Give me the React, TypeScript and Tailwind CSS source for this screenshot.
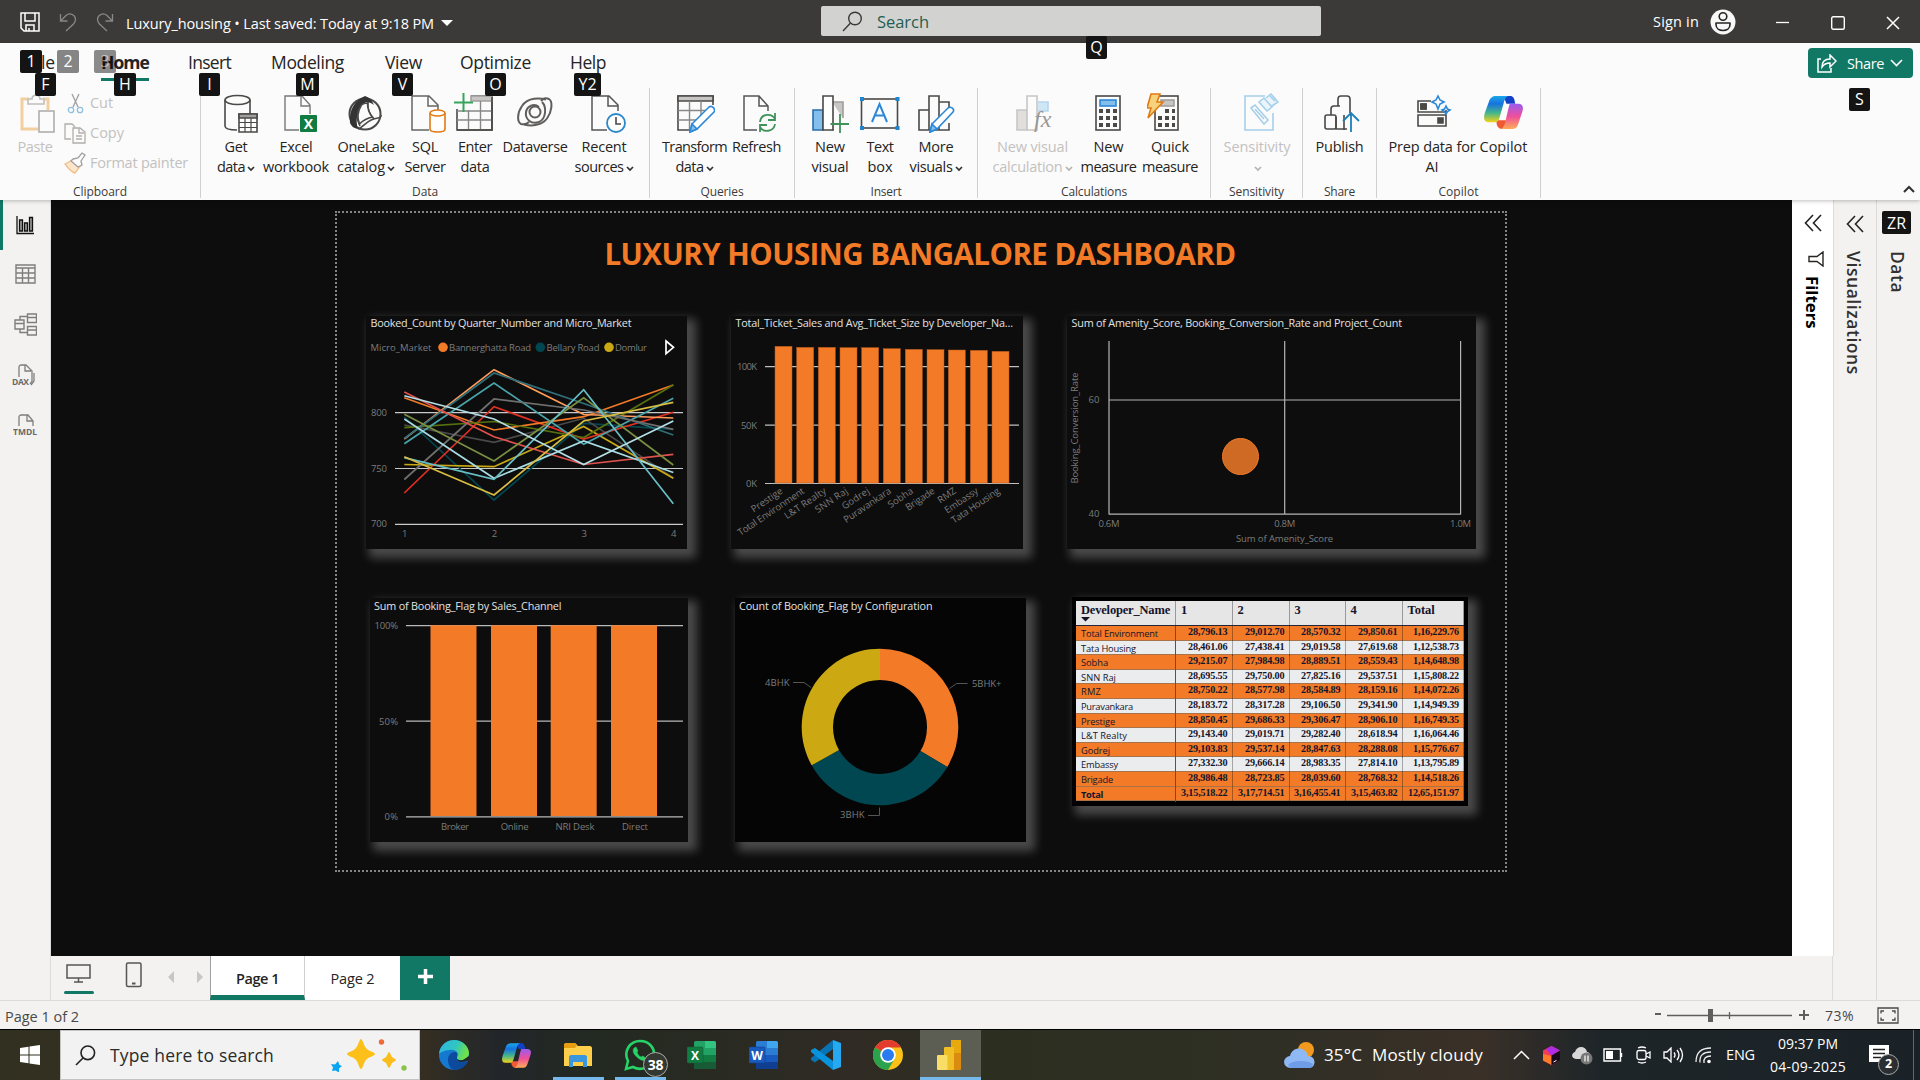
import React, { useLayoutEffect, useRef, useState } from "react";

/* Text set to a known width by spreading the difference over its letters. */
function Fit({ w, children, className = "" }: { w: number; children: string; className?: string }) {
  const ref = useRef<HTMLSpanElement>(null);
  const [ls, setLs] = useState(0);
  useLayoutEffect(() => {
    if (ref.current) {
      const natural = ref.current.getBoundingClientRect().width;
      setLs((w - natural) / children.length);
    }
  }, []);
  return (
    <span className={`inline-block shrink-0 whitespace-nowrap ${className}`} style={{ width: w }}>
      <span ref={ref} style={{ letterSpacing: ls }}>{children}</span>
    </span>
  );
}

function Key({ children, className = "" }: { children: string; className?: string }) {
  return (
    <span className={`absolute z-20 flex h-[23px] items-center justify-center rounded-[2px] text-[16px] text-white ${className}`}>
      {children}
    </span>
  );
}

const Chev = ({ c = "#323130" }: { c?: string }) => (
  <svg width="8" height="6" viewBox="0 0 8 6" className="ml-[2px] mt-[3px] inline-block" fill="none" stroke={c} strokeWidth="1.7"><path d="M1 1l3 3 3-3" /></svg>
);

/* ---------- title bar ---------- */
function TitleBar() {
  return (
    <header className="flex h-[43px] items-center bg-[#3b3a38] text-white">
      <svg width="20" height="20" viewBox="0 0 20 20" className="ml-[20px]" fill="none" stroke="#fff" strokeWidth="1.5"><path d="M1 1h18v18H4l-3-3zM5 1v8h10V1M6 19v-6h8v6M9 16v3" /></svg>
      <svg width="18" height="20" viewBox="0 0 18 20" className="ml-[19px]" fill="none" stroke="#8a8886" strokeWidth="1.3"><path d="M1.500 2v7h7M1.500 9L7 3.500c4-3.500 9.500-.5 9.500 4 0 2-.8 3-2 4.500L7 19" /></svg>
      <svg width="18" height="20" viewBox="0 0 18 20" className="ml-[19px]" fill="none" stroke="#8a8886" strokeWidth="1.3"><path d="M16.500 2v7h-7M16.500 9L11 3.500c-4-3.500-9.500-.5-9.500 4 0 2 .8 3 2 4.500L11 19" /></svg>
      <Fit w={308} className="ml-[12px] mt-[5px] text-[14.500px]">Luxury_housing • Last saved: Today at 9:18 PM</Fit>
      <svg width="12" height="7" viewBox="0 0 12 7" className="ml-[7px] mt-[3px]" fill="#fff"><path d="M0 0h12L6 6z" /></svg>
      <div className="ml-[368px] mb-[1px] flex h-[30px] w-[500px] items-center rounded-[2px] bg-[#d2d2d0]">
        <svg width="21" height="21" viewBox="0 0 21 21" className="ml-[21px]" fill="none" stroke="#3b3a39" strokeWidth="1.400"><circle cx="13" cy="7.500" r="6.300" /><path d="M8.500 12L1 20" /></svg>
        <Fit w={52} className="ml-[14px] mt-[2px] text-[16.500px] text-[#1f5f50]">Search</Fit>
      </div>
      <Fit w={46} className="ml-[332px] text-[14.500px]">Sign in</Fit>
      <svg width="26" height="26" viewBox="0 0 26 26" className="ml-[11px]"><circle cx="13" cy="13" r="12.500" fill="#f8f8f8" /><circle cx="13" cy="7.500" r="3.800" fill="none" stroke="#252423" strokeWidth="1.600" /><path d="M6 14h14v1.500c0 8-14 8-14 0z" fill="none" stroke="#252423" strokeWidth="1.600" strokeLinejoin="round" /></svg>
      <svg width="13" height="14" viewBox="0 0 13 14" className="ml-[40px]" stroke="#fff" strokeWidth="1.300"><path d="M0 7.500h13" /></svg>
      <svg width="14" height="14" viewBox="0 0 14 14" className="ml-[42px] mt-[2px]" fill="none" stroke="#fff" strokeWidth="1.400"><rect x=".7" y=".7" width="12.600" height="12.600" rx="1.500" /></svg>
      <svg width="14" height="14" viewBox="0 0 14 14" className="ml-[41px] mt-[3px]" stroke="#fff" strokeWidth="1.500"><path d="M1 1l12 12M13 1L1 13" /></svg>
    </header>
  );
}

/* ---------- ribbon icons ---------- */
const D = "#4a4947";
const I = ({ children, w = 40 }: { children: React.ReactNode; w?: number }) => (
  <svg width={w} height="40" viewBox={`0 0 ${w} 40`} fill="none" stroke={D} strokeWidth="1.600" className="shrink-0">{children}</svg>
);
const icons: Record<string, React.ReactNode> = {
  get: <I><path d="M6 7v26c0 2.500 5 4 12 4M31 7v14" /><ellipse cx="18.500" cy="7" rx="12.500" ry="4.500" /><path d="M20 21h18v18H20z" fill="#fff" /><path d="M20 21h18v4H20z" fill="#a19f9d" /><path d="M20 29.500h18M20 34.500h18M26 25v14M32 25v14" strokeWidth="1.200" /></I>,
  excel: <I><path d="M32 21V12l-8-9H7v34h14M23 3v10h9" stroke="#777" strokeWidth="1.400" /><rect x="22" y="22" width="17" height="17" rx="1" fill="#107c41" stroke="none" /><text x="30.500" y="36" textAnchor="middle" fontSize="14" fontWeight="700" fill="#fff" stroke="none">X</text></I>,
  lake: <I><circle cx="20" cy="21" r="15.500" strokeWidth="2" /><path d="M20 3C9 8 4 17 5 30c2 4 4 5 8 6-3-9-1-19 8-27 2 0 6 1 8 3C27 7 24 4 20 3z" fill="#333" stroke="none" /><path d="M16 13c-5 8-4 15-1 20M13 36c6-2 9-10 20-11 2 0 3-1 3-3M23 9c-1 8 2 13 6 17" /><path d="M16.500 12c-5 8-4 14-2 19 4-4 8-6 13-7-4-4-5-9-5-14-2 0-4 0-6 2z" fill="#fbfbfb" /></I>,
  sql: <I><path d="M32 17v-5l-9-9H6v34h17M22 3v10h10" stroke="#666" strokeWidth="1.500" /><path d="M24 20v16c0 4 15 4 15 0V20" stroke="#e07b12" fill="#fff" /><ellipse cx="31.500" cy="20" rx="7.500" ry="3" stroke="#e07b12" fill="#fff" /></I>,
  enter: <I><path d="M17 3h21v34H3V16" /><path d="M17 3h21v5H17z" fill="#c8c6c4" stroke="#a19f9d" /><path d="M3 18h35M3 27h35M14.500 17v20M26.500 8v29" stroke="#888" strokeWidth="1.400" /><path d="M3 37h35V4" /><path d="M9.500 0v19M0 9.500h19" stroke="#35a559" strokeWidth="2" /></I>,
  dv: <I><g stroke="#605e5c" strokeWidth="2"><path d="M31 7.500C25 6 13 5 7 14c-5 7-5 16-1 18 4 1 6 0 8-2" /><path d="M9 32.500c6 1.500 17 2 23-6 5-7 6-17 2-19.500-4-2-6 0-8 2" /><path d="M27 10c5 5 4 17-3 20-8 3-14-3-13-10 1-6 8-9 13-5" /><circle cx="20" cy="20" r="5.500" /></g></I>,
  recent: <I><path d="M32 18v-6l-9-9H6v34h15M22 3v10h10" stroke="#555" strokeWidth="1.500" /><circle cx="30" cy="30" r="9" fill="#fff" stroke="#2b88c8" strokeWidth="1.800" /><path d="M30 24v7h5" /></I>,
  transform: <I><path d="M38 12V3H3v34h13" /><path d="M3 3h35v5H3z" fill="#c8c6c4" /><path d="M3 17.500h28M3 27h20M14.500 8v28M26 8v14" stroke="#888" strokeWidth="1.400" /><path d="M17 31L34 14c3-2 7 2 5 5L22 36l-7 3z" fill="#fff" stroke="#2b88d8" /><path d="M17 31l5 5-7 3z" fill="#83beec" stroke="#2b88d8" /></I>,
  refresh: <I><path d="M31 18v-5L22 3H7v34h13M22 3v10h9" stroke="#555" strokeWidth="1.500" /><path d="M23 29c1-9 12-9 15-3M38 20v7h-7M38 31c-1 8-12 9-15 3M23 39v-7h7" stroke="#41925a" strokeWidth="1.800" /></I>,
  newv: <I><path d="M3 17h10v20H3z" fill="#83beec" stroke="#2b6ea8" /><path d="M22 9h11v16M24 37h-2V9" fill="#c8c6c4" stroke="#a19f9d" /><path d="M13 3h10v34H13z" fill="#fff" /><path d="M30 21v19M20.500 31H39" stroke="#41925a" strokeWidth="1.800" /></I>,
  tb: <I><rect x="1.500" y="6" width="36" height="29" /><path d="M12 29l7.500-18L27 29M15 22.500h10" stroke="#2b88d8" strokeWidth="2" /><g fill="#1c86d1" stroke="none"><path d="M0 4h4v4H0zM35.500 4h4v4h-4zM0 33h4v4H0zM35.500 33h4v4h-4z" /></g></I>,
  more: <I><path d="M3 17h10v20H3zM13 3h10v34H13zM23 9h10v8M33 30v7H23" /><path d="M16 31L32 15c3-2 7 1 5 4L21 36l-7 3z" fill="#fff" stroke="#2b88d8" /><path d="M16 31l5 5-7 3z" fill="#83beec" stroke="#2b88d8" /></I>,
  calc: <I><path d="M4 17h10v20H4z" fill="#e1dfdd" stroke="#c8c6c4" /><path d="M25 9h10v9H25" fill="#cfe6f7" stroke="#b5d6ee" /><path d="M14 3h10v34H14z" fill="#fbfbfb" stroke="#c8c6c4" /><text x="21" y="34" fontSize="24" fontStyle="italic" fontFamily="Liberation Serif" fill="#9a9896" stroke="none">fx</text></I>,
  measure: <I><rect x="8" y="3" width="24" height="34" /><rect x="12" y="7" width="16" height="6" fill="#83beec" stroke="#2b88d8" /><g fill={D} stroke="none"><path d="M11 16h4v4h-4zM18 16h4v4h-4zM25 16h4v4h-4zM11 23h4v4h-4zM18 23h4v4h-4zM25 23h4v4h-4zM11 30h4v4h-4zM18 30h4v4h-4zM25 30h4v4h-4z" /></g></I>,
  quick: <I><rect x="8" y="3" width="23" height="34" /><rect x="14" y="7" width="13" height="6" fill="#c8c6c4" stroke="#a19f9d" /><g fill={D} stroke="none"><path d="M11 23h4v4h-4zM18 16h4v4h-4zM25 16h3v4h-3zM18 23h4v4h-4zM25 23h3v4h-3zM11 30h4v4h-4zM18 30h4v4h-4zM25 30h3v4h-3z" /></g><path d="M4 1h9l-3 8h6L1 25l3-10H0z" fill="#f7d27c" stroke="#e07b12" strokeWidth="1.600" /></I>,
  sens: <I><g stroke="#a6cfea"><path d="M26 3H6v34h28V20" /><path d="M12 15l4-3 13 15-4 4zM16 16l9 10" /><path d="M20 9l5-4 8 9-5 4zM27 5l5-4 7 8-6 4M31 3l5 5" fill="#eaf4fb" /></g></I>,
  publish: <I w={38}><rect x="2" y="22" width="11" height="14" rx="2" /><path d="M8 22v-6c0-2 1-3 3-3h6M13 24v12h11M15 13V6c0-2 1-3 3-3h6c2 0 3 1 3 3v14M21 22v15" /><path d="M28 39V20M20 28l8-8 8 8" stroke="#1c7fb8" strokeWidth="1.800" /></I>,
  prep: <I><path d="M19 8H6v11h28v-2M6 22h28v11H6zM9 11h5v5H9z" /><path d="M9 11h5v5H9zM26 25h5v5h-5z" fill={D} /><path d="M26 3l2 4 4 2-4 2-2 5-2-5-4-2 4-2zM34 13l1.500 3 2.500 1-2.500 1.500L34 21l-1.500-2.500L30 17l2.500-1z" stroke="#2b88d8" /></I>,
};

function CopilotLogo({ s }: { s: number }) {
  return (
    <svg width={s} height={s} viewBox="0 0 40 40" className="shrink-0">
      <defs>
        <linearGradient id="cpA" x1="0" y1="0" x2="0" y2="1"><stop offset="0" stopColor="#19a8e8" /><stop offset=".3" stopColor="#1673e0" /><stop offset=".65" stopColor="#46b68a" /><stop offset="1" stopColor="#f4d417" /></linearGradient>
        <linearGradient id="cpB" x1="0" y1="0" x2="0" y2="1"><stop offset="0" stopColor="#9a5cf0" /><stop offset=".5" stopColor="#ee4f9b" /><stop offset="1" stopColor="#ffad55" /></linearGradient>
      </defs>
      <path d="M20 3h7c3 0 4 2 5 8h-9z" fill="#1241c8" />
      <path d="M13 28c-1 5 2 9 5 9h3l4-9z" fill="#ef5a35" />
      <path d="M12 3h13c-3 1-4 4-5 8l-4 14c-1 4-3 5-6 5H5c-5 0-6-4-4-10L5 9c1-4 4-6 7-6z" fill="url(#cpA)" />
      <path d="M27 11h8c5 0 6 4 4 9l-4 12c-1 4-4 5-7 5H17c3-1 4-4 5-8l3-13c1-3 1-5 2-5z" fill="url(#cpB)" />
    </svg>
  );
}

type Btn = { w: number; icon: React.ReactNode; a: string; aw: number; b?: string; bw?: number; chev?: boolean; dim?: boolean; dx?: string };
function RibbonButton({ w, icon, a, aw, b, bw, chev, dim, dx = "" }: Btn) {
  return (
    <div className={`flex shrink-0 flex-col items-center text-[14.500px] leading-5 ${dim ? "text-[#c3c1bf]" : "text-[#252423]"}`} style={{ width: w }}>
      <div className={`h-[40px] ${dx}`}>{icon}</div>
      <div className="mt-[4px] flex h-5 justify-center"><Fit w={aw}>{a}</Fit></div>
      <div className="flex h-5 items-center justify-center whitespace-nowrap">
        {b && <Fit w={bw || 40}>{b}</Fit>}
        {chev && <Chev c={dim ? "#b5b3b1" : "#323130"} />}
      </div>
    </div>
  );
}
function Group({ w, label, lw, children, pad = "" }: { w: number; label: string; lw: number; children: React.ReactNode; pad?: string }) {
  return (
    <section className="flex h-[110px] shrink-0 flex-col border-r border-[#d2d0ce]" style={{ width: w }}>
      <div className={`flex h-[95px] shrink-0 pt-[5px] ${pad}`}>{children}</div>
      <div className="flex h-[15px] shrink-0 justify-center text-[12px] leading-[17px] text-[#3b3a39]"><Fit w={lw}>{label}</Fit></div>
    </section>
  );
}

function Ribbon() {
  return (
    <div className="relative z-10 h-[157px] bg-[#fbfbfb] shadow-[0_1px_4px_rgba(0,0,0,0.25)]">
      <nav className="relative flex h-[45px] items-start pt-[7px] text-[17.500px] leading-[25px] text-[#252423]">
        <Fit w={27} className="ml-[28px]">File</Fit>
        <div className="ml-[46px] h-[31px] border-b-[3px] border-[#117865]"><Fit w={48} className="font-bold">Home</Fit></div>
        <Fit w={43} className="ml-[39px]">Insert</Fit>
        <Fit w={73} className="ml-[40px]">Modeling</Fit>
        <Fit w={37} className="ml-[41px]">View</Fit>
        <Fit w={71} className="ml-[38px]">Optimize</Fit>
        <Fit w={36} className="ml-[39px]">Help</Fit>
        <div className="ml-[1202px] -mt-[2px] flex h-[30px] w-[105px] items-center rounded-[4px] bg-[#117865] text-[14.500px] text-white">
          <svg width="20" height="19" viewBox="0 0 20 19" className="ml-[9px]" fill="none" stroke="#fff" strokeWidth="1.500"><path d="M4 5H1v13h13v-4M5 13c0-5 3-8 8-8V1l6 6-6 6V9c-4 0-6 1-8 4z" /></svg>
          <Fit w={37} className="ml-[10px]">Share</Fit>
          <svg width="13" height="8" viewBox="0 0 13 8" className="ml-[6px]" fill="none" stroke="#fff" strokeWidth="1.600"><path d="M1 1l5.500 5.500L12 1" /></svg>
        </div>
        <Key className="left-[20px] top-[7px] w-[22px] bg-[#141414]">1</Key>
        <Key className="left-[57px] top-[7px] w-[22px] bg-[#858585] text-[#e8e8e8]">2</Key>
        <Key className="left-[94px] top-[7px] w-[22px] bg-black/45 text-white/50">3</Key>
        <Key className="left-[35px] top-[30px] w-[21px] bg-[#141414]">F</Key>
        <Key className="left-[114px] top-[30px] w-[22px] bg-[#141414]">H</Key>
        <Key className="left-[199px] top-[30px] w-[21px] bg-[#141414] text-[#60cdf5]">I</Key>
        <Key className="left-[296px] top-[30px] w-[23px] bg-[#141414]">M</Key>
        <Key className="left-[392px] top-[30px] w-[21px] bg-[#141414]">V</Key>
        <Key className="left-[485px] top-[30px] w-[21px] bg-[#141414]">O</Key>
        <Key className="left-[574px] top-[30px] w-[27px] bg-[#141414]">Y2</Key>
        <Key className="left-[1086px] -top-[7px] w-[21px] bg-[#141414]">Q</Key>
        <Key className="left-[1849px] top-[45px] w-[21px] bg-[#141414]">S</Key>
      </nav>
      <div className="flex">
        <Group w={201} label="Clipboard" lw={54}>
          <div className="ml-[17px] flex w-[38px] flex-col items-center text-[14.500px] leading-5 text-[#c3c1bf]">
            <svg width="38" height="40" viewBox="0 0 38 40" fill="none" strokeWidth="1.600"><path d="M12 6H5v30h16" stroke="#f3cf9f" strokeWidth="3" /><path d="M26 6h5v11" stroke="#f3cf9f" strokeWidth="3" /><path d="M11 11V6h4c0-5 8-5 8 0h4v5z" stroke="#c0bebc" fill="#fbfbfb" /><rect x="22" y="18" width="15" height="21" stroke="#b0aeac" fill="#fbfbfb" /></svg>
            <div className="mt-[4px] mr-[2px]"><Fit w={35}>Paste</Fit></div>
          </div>
          <div className="ml-[9px] flex flex-col text-[14.500px] text-[#c3c1bf]">
            <div className="-mt-[5px] flex h-[30px] items-center"><svg width="22" height="22" viewBox="0 0 22 22" fill="none" strokeWidth="1.300"><path d="M8 2l6 13M15 2L9 15" stroke="#a19f9d" /><circle cx="7" cy="18" r="2.700" stroke="#91c0df" /><circle cx="16" cy="18" r="2.700" stroke="#91c0df" /></svg><Fit w={23} className="ml-[4px]">Cut</Fit></div>
            <div className="flex h-[30px] items-center"><svg width="22" height="22" viewBox="0 0 22 22" fill="none" stroke="#b0aeac" strokeWidth="1.300"><path d="M7 17H1V2h7l3 3M9 6h7l5 4v11H9zM15 6v5h5M12 14h6M12 17h6" /></svg><Fit w={34} className="ml-[4px]">Copy</Fit></div>
            <div className="flex h-[30px] items-center"><svg width="22" height="22" viewBox="0 0 22 22" fill="none" strokeWidth="1.300"><path d="M1 12l9-5 7 6-6 8c-4-1-7-5-10-9z" stroke="#efc08a" fill="#fbe6cc" /><path d="M9 7l5-1 4-5 3 2-4 6 1 4-4 2-7-6z" stroke="#a19f9d" fill="#fbfbfb" /></svg><Fit w={98} className="ml-[4px]">Format painter</Fit></div>
          </div>
        </Group>
        <Group w={449} label="Data" lw={26} pad="pl-[8px]">
          <RibbonButton w={54} icon={icons.get} dx="ml-[6px]" a="Get" aw={23} b="data" bw={28} chev />
          <RibbonButton w={66} icon={icons.excel} dx="ml-[4px]" a="Excel" aw={33} b="workbook" bw={66} />
          <RibbonButton w={74} icon={icons.lake} dx="-ml-[2px]" a="OneLake" aw={57} b="catalog" bw={48} chev />
          <RibbonButton w={44} icon={icons.sql} dx="ml-[2px]" a="SQL" aw={26} b="Server" bw={41} />
          <RibbonButton w={56} icon={icons.enter} dx="-ml-[2px]" a="Enter" aw={34} b="data" bw={29} />
          <RibbonButton w={64} icon={icons.dv} dx="-mt-[1px] mb-[1px]" a="Dataverse" aw={65} />
          <RibbonButton w={74} icon={icons.recent} dx="ml-[3px]" a="Recent" aw={45} b="sources" bw={49} chev />
        </Group>
        <Group w={145} label="Queries" lw={43} pad="pl-[10px]">
          <RibbonButton w={69} icon={icons.transform} a="Transform" aw={65} b="data" bw={28} chev />
          <RibbonButton w={55} icon={icons.refresh} a="Refresh" aw={49} />
        </Group>
        <Group w={183} label="Insert" lw={31} pad="pl-[12px]">
          <RibbonButton w={46} icon={icons.newv} a="New" aw={30} b="visual" bw={37} />
          <RibbonButton w={54} icon={icons.tb} a="Text" aw={27} b="box" bw={25} />
          <RibbonButton w={58} icon={icons.more} a="More" aw={35} b="visuals" bw={43} chev />
        </Group>
        <Group w={233} label="Calculations" lw={66} pad="pl-[9px]">
          <RibbonButton w={91} icon={icons.calc} a="New visual" aw={71} b="calculation" bw={70} chev dim />
          <RibbonButton w={61} icon={icons.measure} dx="-ml-[2px]" a="New" aw={30} b="measure" bw={56} />
          <RibbonButton w={62} icon={icons.quick} dx="-ml-[7px]" a="Quick" aw={38} b="measure" bw={56} />
        </Group>
        <Group w={92} label="Sensitivity" lw={55} pad="pl-[1px] justify-center">
          <RibbonButton w={80} icon={icons.sens} a="Sensitivity" aw={67} chev dim dx="ml-[3px]" />
        </Group>
        <Group w={74} label="Share" lw={31} pad="justify-center">
          <RibbonButton w={60} icon={icons.publish} dx="ml-[4px]" a="Publish" aw={48} />
        </Group>
        <Group w={164} label="Copilot" lw={40} pad="pl-[11px]">
          <RibbonButton w={88} icon={icons.prep} a="Prep data for" aw={87} b="AI" bw={13} />
          <RibbonButton w={55} icon={<CopilotLogo s={39} />} a="Copilot" aw={48} />
        </Group>
        <svg width="12" height="8" viewBox="0 0 12 8" className="ml-auto mr-[5px] mt-[97px]" fill="none" stroke="#323130" strokeWidth="2"><path d="M1 7l5-5 5 5" /></svg>
      </div>
    </div>
  );
}

/* ---------- side rail ---------- */
function Rail() {
  return (
    <aside className="flex w-[51px] shrink-0 flex-col border-r border-[#dddbd9] bg-[#f3f2f1]">
      <div className="flex h-[50px] items-center border-l-[3px] border-[#117865] pl-[13px]"><svg width="19" height="19" viewBox="0 0 19 19" fill="#999" stroke="#111" strokeWidth="1.300"><path d="M1 0v17.500h17" fill="none" /><path d="M3.500 4h3v11h-3zM8.500 7h3v8h-3zM13.500 1.500h3V15h-3z" /></svg></div>
      <div className="flex h-[49px] items-center pl-[15px]"><svg width="21" height="20" viewBox="0 0 21 20" className="-mt-[2px]" fill="none" stroke="#807e7c" strokeWidth="1.400"><path d="M1 1h19v18H1zM1 4h19M1 9h19M1 14h19M7.500 4v15M13.500 4v15" /></svg></div>
      <div className="flex h-[51px] items-center pl-[14px]"><svg width="23" height="23" viewBox="0 0 23 23" fill="none" stroke="#807e7c" strokeWidth="1.400"><path d="M1 7h9v9H1zM1 10.500h9M13.500 1h9v8.500h-9zM13.500 4.500h9M13.500 13.500h9V22h-9zM13.500 17h9M6 7V3.500h7M6 16v3.500h7" /></svg></div>
      <div className="flex h-[50px] items-center pl-[12px]"><svg width="24" height="22" viewBox="0 0 24 22" fill="none" stroke="#807e7c" strokeWidth="1.300"><path d="M7 13V3c0-1 1-2 2-2h5l6 6v10l-2 3M13 1v6h6M22 9v8l-3 4" /><text x="0" y="20.500" fontSize="8.500" fontWeight="700" fill="#6b6967" stroke="none" textLength="17">DAX</text></svg></div>
      <div className="flex h-[50px] items-center pl-[13px]"><svg width="25" height="22" viewBox="0 0 25 22" fill="none" stroke="#807e7c" strokeWidth="1.300"><path d="M6 12V3c0-1 1-2 2-2h7l5 6v5M14 1v6h6" /><text x="0" y="20.500" fontSize="8.500" fontWeight="700" fill="#6b6967" stroke="none" textLength="24">TMDL</text></svg></div>
    </aside>
  );
}

/* ---------- report visuals ---------- */
const OR = "#f37a26";
function Card({ x, y, w, h, children }: { x: number; y: number; w: number; h: number; children: React.ReactNode }) {
  return (
    <svg width={w} height={h} viewBox={`${x} ${y} ${w} ${h}`} className="shrink-0 bg-[#0d0d0d] shadow-[6px_6px_9px_3px_rgba(255,255,255,0.25)]">
      {children}
    </svg>
  );
}
type TP = { x: number; y: number; w?: number; s?: number; fill?: string; anchor?: "start" | "middle" | "end"; children: string; transform?: string };
const T = ({ x, y, w, s = 9.5, fill = "#7c7c7c", anchor = "start", children, transform }: TP) => (
  <text x={x} y={y} fontSize={s} fill={fill} textAnchor={anchor} textLength={w} transform={transform}>{children}</text>
);
const Title = ({ x, y, w, children }: { x: number; y: number; w: number; children: string }) => <T x={x} y={y} w={w} s={10.8} fill="#e2e2e2">{children}</T>;

const series: [string, number[]][] = [
  ["#014751", [417, 500, 423.3, 429.3]],
  ["#4a4a4a", [425, 442.300, 418.300, 478]],
  ["#c9a814", [464.500, 466.700, 426.500, 478.300]],
  ["#e02f23", [493, 406.700, 439, 412.300]],
  [OR, [397.700, 430, 416.700, 385]],
  ["#57700f", [427.700, 421.500, 437.500, 385]],
  ["#ff9c5c", [439, 369.700, 414.500, 418]],
  ["#2f6f7a", [438.500, 373, 403.500, 435]],
  ["#4aa5ab", [443.700, 383, 444.300, 398.300]],
  ["#6f6f6f", [479.500, 399, 410, 429.300]],
  ["#e0524d", [392, 436.700, 464.500, 454.300]],
  ["#7a8f42", [414.300, 461, 397.700, 465]],
  ["#a8dce2", [419, 478.300, 441, 472.500]],
  ["#69bfc7", [457.700, 479.300, 389.700, 503.700]],
  ["#d9bd42", [456.700, 495, 421, 402.300]],
  ["#b5dfe6", [395.700, 419, 464.500, 421]],
];
const xs = [404.3, 494, 583.7, 673.3];

function LineChart() {
  return (
    <Card x={366} y={316} w={321} h={233}>
      <Title x={370.500} y={327} w={261}>Booked_Count by Quarter_Number and Micro_Market</Title>
      <T x={370.500} y={351} w={61}>Micro_Market</T>
      <circle cx="443" cy="347.300" r="4.800" fill={OR} /><T x={449} y={351} w={82}>Bannerghatta Road</T>
      <circle cx="540.300" cy="347.300" r="4.800" fill="#014751" /><T x={546.500} y={351} w={53}>Bellary Road</T>
      <circle cx="609" cy="347.300" r="4.800" fill="#c9a814" /><T x={615} y={351} w={32}>Domlur</T>
      <path d="M666 341l7.500 6.300-7.500 6.300z" fill="none" stroke="#fff" strokeWidth="1.700" />
      <path d="M395 412.700h288M395 468.500h288M395 524.300h288" stroke="#c9c9c9" strokeWidth="1.200" />
      <T x={371} y={416} w={16}>800</T><T x={371} y={472} w={16}>750</T><T x={371} y={527} w={16}>700</T>
      {["1", "2", "3", "4"].map((n, i) => <T key={n} x={xs[i] + 0.500} y={537} anchor="middle">{n}</T>)}
      {series.map(([c, v], i) => <polyline key={i} points={v.map((y, k) => `${xs[k]},${y}`).join(" ")} fill="none" stroke={c} strokeWidth="1.700" />)}
    </Card>
  );
}

const devs: [string, number, number, number][] = [
  ["Prestige", 195, 139, 36], ["Total Environment", 260, 142, 78], ["L&T Realty", 325, 142, 48], ["SNN Raj", 390, 143, 37], ["Godrej", 455, 143, 31],
  ["Puravankara", 520, 146, 55], ["Sobha", 586, 148, 28], ["Brigade", 651, 149, 33], ["RMZ", 715, 150, 20], ["Embassy", 781, 151, 38], ["Tata Housing", 846, 154, 56],
];
function TicketChart() {
  return (
    <Card x={731} y={316} w={292} h={233}>
      <Title x={735.500} y={327} w={277.500}>Total_Ticket_Sales and Avg_Ticket_Size by Developer_Na...</Title>
      <path d="M765 366.700h254M765 425.200h254M765 483.500h254" stroke="#c0c0c0" strokeWidth="1.200" />
      <T x={757} y={370} w={20} anchor="end">100K</T><T x={757} y={428.500} w={16} anchor="end">50K</T><T x={757} y={487} w={11} anchor="end">0K</T>
      {devs.map(([n, x, t, w]) => {
        const bx = 710 + x / 3, by = 300 + t / 3;
        return (
          <g key={n}>
            <rect x={bx} y={by} width={17} height={483 - by} fill={OR} stroke="#b5591b" strokeWidth=".5" />
            <T x={bx + 8.500} y={492.500} w={w} anchor="end" transform={`rotate(-34 ${bx + 8.500} 492.500)`}>{n}</T>
          </g>
        );
      })}
    </Card>
  );
}

function Scatter() {
  return (
    <Card x={1067} y={316} w={409} h={233}>
      <Title x={1071.500} y={327} w={330.500}>Sum of Amenity_Score, Booking_Conversion_Rate and Project_Count</Title>
      <path d="M1109 341v173.500M1284.700 341v173.500M1460.600 341v173.500M1109 400h352M1109 514.200h352" stroke="#b4b4b4" strokeWidth="1.200" />
      <T x={1099.500} y={403} w={11} anchor="end">60</T><T x={1099.500} y={517} w={11} anchor="end">40</T>
      <T x={1109} y={527} w={21} anchor="middle">0.6M</T><T x={1284.700} y={527} w={21} anchor="middle">0.8M</T><T x={1460.600} y={527} w={21} anchor="middle">1.0M</T>
      <T x={1284.500} y={542} w={97} anchor="middle">Sum of Amenity_Score</T>
      <T x={1078} y={428} w={111} anchor="middle" transform="rotate(-90 1078 428)">Booking_Conversion_Rate</T>
      <circle cx="1240.500" cy="456.500" r="18" fill="#cf6a24" stroke="#ee7a2a" />
    </Card>
  );
}

const channels: [string, number, number, number][] = [["Broker", 430.500, 455, 28], ["Online", 491, 514.700, 28], ["NRI Desk", 550.700, 575, 39], ["Direct", 611, 635, 26]];
function Channels() {
  return (
    <Card x={370} y={598} w={318} h={244}>
      <Title x={374} y={609.500} w={187.500}>Sum of Booking_Flag by Sales_Channel</Title>
      <path d="M406 625.700h277M406 721.200h277M406 816.800h277" stroke="#b8b8b8" strokeWidth="1.200" />
      <T x={398} y={629} w={23.500} anchor="end">100%</T><T x={398} y={724.500} w={19} anchor="end">50%</T><T x={398} y={820} w={13.500} anchor="end">0%</T>
      {channels.map(([n, x, c, w]) => <g key={n}><rect x={x} y={625.300} width={46} height={190.700} fill={OR} /><T x={c} y={830} w={w} anchor="middle">{n}</T></g>)}
    </Card>
  );
}

function arc(a0: number, a1: number) {
  const p = (a: number, r: number) => `${880 + r * Math.sin((a * Math.PI) / 180)} ${727 - r * Math.cos((a * Math.PI) / 180)}`;
  return `M${p(a0, 78.3)}A78.3 78.3 0 0 1 ${p(a1, 78.3)}L${p(a1, 47)}A47 47 0 0 0 ${p(a0, 47)}Z`;
}
function Donut() {
  return (
    <Card x={735} y={598} w={291} h={244}>
      <rect x="735" y="598" width="291" height="244" fill="#050505" />
      <Title x={739} y={609.500} w={193.500}>Count of Booking_Flag by Configuration</Title>
      <path d={arc(0, 120.700)} fill={OR} /><path d={arc(120.700, 240.700)} fill="#014751" /><path d={arc(240.700, 360)} fill="#cca913" />
      <path d="M793 682.500h11l7 5M967.500 683.500h-11l-7 5M868 815.500h11.500v-8" fill="none" stroke="#555" />
      <T x={765} y={686} w={24.500}>4BHK</T><T x={972} y={687} w={29.500}>5BHK+</T><T x={840} y={818} w={24.500}>3BHK</T>
    </Card>
  );
}

const rows: [string, number, string[]][] = [
  ["Total Environment", 77, ["28,796.13", "29,012.70", "28,570.32", "29,850.61", "1,16,229.76"]],
  ["Tata Housing", 55, ["28,461.06", "27,438.41", "29,019.58", "27,619.68", "1,12,538.73"]],
  ["Sobha", 27, ["29,215.07", "27,984.98", "28,889.51", "28,559.43", "1,14,648.98"]],
  ["SNN Raj", 35, ["28,695.55", "29,750.00", "27,825.16", "29,537.51", "1,15,808.22"]],
  ["RMZ", 20, ["28,750.22", "28,577.98", "28,584.89", "28,159.16", "1,14,072.26"]],
  ["Puravankara", 52, ["28,183.72", "28,317.28", "29,106.50", "29,341.90", "1,14,949.39"]],
  ["Prestige", 34, ["28,850.45", "29,686.33", "29,306.47", "28,906.10", "1,16,749.35"]],
  ["L&T Realty", 46, ["29,143.40", "29,019.71", "29,282.40", "28,618.94", "1,16,064.46"]],
  ["Godrej", 29, ["29,103.83", "29,537.14", "28,847.63", "28,288.08", "1,15,776.67"]],
  ["Embassy", 37, ["27,332.30", "29,666.14", "28,983.35", "27,814.10", "1,13,795.89"]],
  ["Brigade", 32, ["28,986.48", "28,723.85", "28,039.60", "28,768.32", "1,14,518.26"]],
  ["Total", 22, ["3,15,518.22", "3,17,714.51", "3,16,455.41", "3,15,463.82", "12,65,151.97"]],
];
const serif = "font-['Liberation_Serif',serif] font-bold";
const cols = "grid grid-cols-[100px_56.5px_57px_56px_57px_61.5px]";
function Matrix() {
  return (
    <div className="-mt-px h-[209px] w-[396px] shrink-0 bg-black p-[4px] text-[#14142b] shadow-[6px_6px_9px_3px_rgba(255,255,255,0.25)]">
      <div className={`${cols} h-[25px] border-b border-[#252538] bg-[#e6e6e6] text-[12.500px] leading-[18px] ${serif}`}>
        <div className="flex flex-col border-r border-[#999] pl-[5px]"><Fit w={89} className="h-[16px]">Developer_Name</Fit><svg width="9" height="5" viewBox="0 0 9 5"><path d="M0 0h9L4.500 4.500z" fill="#14142b" /></svg></div>
        {["1", "2", "3", "4", "Total"].map((h) => <div key={h} className="border-r border-[#999] pl-[5px]">{h}</div>)}
      </div>
      {rows.map(([n, w, v], i) => (
        <div key={n} className={`${cols} h-[14.6px] border-b border-[#a8734a] leading-[14px] ${i % 2 === 0 || i === 11 ? "bg-[#f37a26]" : "bg-[#ebecee]"}`}>
          <div className={`border-r border-[#555] pl-[5px] pt-px text-[9.300px] ${i === 11 ? "font-bold" : ""}`}><Fit w={w}>{n}</Fit></div>
          {v.map((c, k) => <div key={k} className={`flex justify-end border-r border-black/30 pr-[4px] text-[10.200px] leading-[12px] ${serif}`}><Fit w={i === 11 ? (k === 4 ? 51 : 46.500) : k === 4 ? 46 : 39.500}>{c}</Fit></div>)}
        </div>
      ))}
    </div>
  );
}

function Report() {
  return (
    <main className="w-[1741px] shrink-0 bg-[#0d0d0d] pl-[284px] pt-[11px]">
      <div className="h-[661px] w-[1172px] border-2 border-dotted border-[#858585]">
        <h1 className="flex h-[86px] justify-center pt-[20px] text-[29.500px] font-bold leading-[42px] text-[#f37a26]"><Fit w={631} className="-ml-[2px]">LUXURY HOUSING BANGALORE DASHBOARD</Fit></h1>
        <div className="mt-[17px] flex pl-[29px]"><LineChart /><div className="w-[44px]" /><TicketChart /><div className="w-[44px]" /><Scatter /></div>
        <div className="mt-[49px] flex pl-[33px]"><Channels /><div className="w-[47px]" /><Donut /><div className="w-[46px]" /><Matrix /></div>
      </div>
    </main>
  );
}

const Collapse = () => <svg width="18" height="18" viewBox="0 0 18 18" fill="none" stroke="#252423" strokeWidth="1.600"><path d="M9 1L1.500 9 9 17M17 1L9.500 9 17 17" /></svg>;
function Panes() {
  return (
    <>
      <aside className="flex w-[41px] shrink-0 flex-col items-center bg-white pt-[14px]">
        <Collapse />
        <svg width="16" height="16" viewBox="0 0 16 16" className="ml-[7px] mt-[19px]" fill="none" stroke="#252423" strokeWidth="1.400"><path d="M15 1v14L9 10.500H1v-5h8z" /></svg>
        <div className="mt-[9px] mr-[2px] text-[16.800px] font-bold leading-[24px] text-black [writing-mode:vertical-rl]">Filters</div>
      </aside>
      <aside className="flex w-[44px] shrink-0 flex-col items-center border-x border-[#dddbd9] bg-[#f3f2f1] pt-[15px]">
        <Collapse />
        <div className="mt-[18px] mr-[3px] text-[17.500px] font-semibold leading-[24px] tracking-[0.560px] text-[#323130] [writing-mode:vertical-rl]">Visualizations</div>
      </aside>
      <aside className="relative flex w-[43px] shrink-0 flex-col items-center bg-[#f3f2f1] pt-[51px]">
        <Key className="left-[5px] top-[11px] w-[29px] bg-[#141414]">ZR</Key>
        <div className="mr-[2px] text-[17.500px] font-semibold leading-[24px] tracking-[0.500px] text-[#323130] [writing-mode:vertical-rl]">Data</div>
      </aside>
    </>
  );
}

function PageTabs() {
  return (
    <div className="flex">
      <div className="h-[44px] w-[51px] border-r border-[#dddbd9]" />
      <div className="flex h-[44px] w-[1782px] border-r border-[#dddbd9] text-[14.500px]">
        <div className="ml-[13px] flex w-[30px] flex-col items-center"><svg width="25" height="19" viewBox="0 0 25 19" className="mr-[2px] mt-[8px]" fill="none" stroke="#555" strokeWidth="1.500"><path d="M1 1h23v13H1zM12.500 14v4M8 18h9" /></svg><div className="mt-[8px] h-[3px] w-[30px] rounded bg-[#117865]" /></div>
        <svg width="18" height="26" viewBox="0 0 18 26" className="ml-[31px] mt-[6px]" fill="none" stroke="#555" strokeWidth="1.500"><rect x="1.500" y="1" width="14.500" height="23.500" rx="1.500" /><path d="M7 21.500h3.500" strokeWidth="2" /></svg>
        <svg width="36" height="12" viewBox="0 0 36 12" className="ml-[25px] mt-[15px]" fill="#c8c6c4"><path d="M6 0v12L0 6zM29 0v12l6-6z" /></svg>
        <div className="ml-[6px] flex w-[95px] justify-center border-b-[5px] border-l border-r border-b-[#117865] border-l-[#a19f9d] border-r-[#d2d0ce] bg-white pt-[12px] font-semibold text-[#252423]"><Fit w={43}>Page 1</Fit></div>
        <div className="flex w-[95px] justify-center bg-white pt-[12px] text-[#252423]"><Fit w={44}>Page 2</Fit></div>
        <div className="flex w-[50px] items-center justify-center bg-[#117865] pb-[3px]"><svg width="15" height="15" viewBox="0 0 15 15" stroke="#fff" strokeWidth="3.500"><path d="M7.500 0v15M0 7.500h15" /></svg></div>
      </div>
      <div className="h-[44px] w-[44px] border-r border-[#dddbd9]" />
    </div>
  );
}
function Status() {
  return (
    <div className="flex h-[30px] items-center border-b border-t border-b-black border-t-[#dddbd9] text-[14.500px] text-[#4a4947]">
      <Fit w={74} className="ml-[5px] mt-[4px]">Page 1 of 2</Fit>
      <svg width="156" height="18" viewBox="0 0 156 18" className="ml-[1575px]" fill="none" stroke="#605e5c"><path d="M1 8h6M145 9h10M150 4v10" strokeWidth="2" /><path d="M13 9.500h125M75.500 6v7" strokeWidth="1.300" /><path d="M56.500 3v13" strokeWidth="5" /></svg>
      <Fit w={29} className="ml-[15px] text-[14px]">73%</Fit>
      <svg width="22" height="17" viewBox="0 0 22 17" className="ml-[23px] mt-[1px]" fill="none" stroke="#4a4947" strokeWidth="1.300"><path d="M1 1h20v15H1zM4 6.500V4h3M15 4h3v2.500M18 10.500V13h-3M7 13H4v-2.500" /></svg>
    </div>
  );
}

/* ---------- taskbar ---------- */
function TaskItem({ children, on = false, active = false, w = "w-[62px]" }: { children: React.ReactNode; on?: boolean; active?: boolean; w?: string }) {
  return (
    <div className={`relative flex h-[50px] shrink-0 flex-col items-center justify-center ${w} ${active ? "bg-[#5c5d53]" : ""}`}>
      {children}
      {on && <div className={`absolute bottom-0 h-[3px] bg-[#76b9ed] ${active ? "w-full" : "w-[51px]"}`} />}
    </div>
  );
}
const Office = ({ c, l }: { c: string[]; l: string }) => (
  <svg width="30" height="28" viewBox="0 0 30 28"><rect x="7" y="0" width="22" height="28" rx="1.500" fill={c[1]} /><path d="M18 0h9.500L29 1.500V7H18z" fill={c[0]} /><path d="M7 14h22v7H7z" fill={c[2]} /><path d="M7 21h22v7H7z" fill={c[3]} /><rect x="0" y="6" width="16" height="16" rx="1" fill={c[2]} stroke={c[3]} strokeWidth=".6" /><text x="8" y="18.500" fontSize="12" fontWeight="700" fill="#fff" textAnchor="middle">{l}</text></svg>
);
function Taskbar() {
  return (
    <footer className="flex h-[50px] items-center bg-[linear-gradient(90deg,#323021_0,#352e22_420px,#22262a_500px,#232a21_600px,#302b24_850px,#2c2f20_1000px,#2f2f25_1260px,#3a3028_1480px,#1e2529_1600px,#1b2227_1920px)] text-white">
      <svg width="20" height="20" viewBox="0 0 20 20" className="ml-[20px]" fill="#fff"><path d="M0 3l8.500-1.200V9.500H0zM9.500 1.600L20 0v9.500H9.500zM0 10.500h8.500v7.800L0 17zM9.500 10.500H20V20L9.500 18.400z" /></svg>
      <div className="ml-[20px] flex h-[50px] w-[360px] items-center border border-[#c4c4c4] bg-[#f2f2f2] text-[#2b2b2b]">
        <svg width="21" height="21" viewBox="0 0 21 21" className="ml-[14px]" fill="none" stroke="#222" strokeWidth="1.600"><circle cx="12.800" cy="7.800" r="6.800" /><path d="M8 13L1 20" /></svg>
        <Fit w={164} className="ml-[14px] text-[17.500px]">Type here to search</Fit>
        <svg width="78" height="34" viewBox="0 0 78 34" className="ml-[57px]"><path d="M30 1c1.500 0 3 7 5 9 2 3 9 4 9 6s-7 3-9 6c-2 2-3.500 9-5 9s-3-7-5-9c-2-3-9-4-9-6s7-3 9-6c2-2 3.500-9 5-9z" fill="#fdc01a" /><path d="M58 14c1 0 2 4 3 5 1 1 4 2 4 3s-3 2-4 3c-1 1-2 5-3 5s-2-4-3-5c-1-1-4-2-4-3s3-2 4-3c1-1 2-5 3-5z" fill="#fbbd1c" /><path d="M7 23l1.500 4 2.500 1-3 2.500v4l-3.500-2L1 33l1-3.500L0 26l4 .5z" fill="#0aa5f0" /><circle cx="50.500" cy="4" r="2.700" fill="#f06a35" /><circle cx="73" cy="30" r="2.700" fill="#8bc34a" /></svg>
      </div>
      <div className="w-[3px]" />
      <TaskItem><svg width="30" height="30" viewBox="0 0 30 30"><defs><linearGradient id="ed" x1="0" y1="0" x2="1" y2=".3"><stop offset="0" stopColor="#2fb5e8" /><stop offset=".6" stopColor="#30c5c0" /><stop offset="1" stopColor="#6ee04a" /></linearGradient></defs><circle cx="15" cy="15" r="15" fill="#1479cf" /><path d="M0 14C1 4 9 0 15 0c9 0 15 7 15 13 0 5-4 7-8 7-3 0-5-1-4-3 3-5-3-8-7-7C5 10 1 13 0 14z" fill="url(#ed)" /><path d="M9 20c0-5 3-8 7-8 2 0 3 2 2 5-1 6 6 6 11 4-2 5-8 9-13 9-4 0-7-5-7-10z" fill="#0c4a9e" /><path d="M18 17c-1 6 6 6 12 3V16l-6 4c-4 1-7-1-6-3z" fill="#22272b" /></svg></TaskItem>
      <TaskItem><CopilotLogo s={29} /></TaskItem>
      <TaskItem on><svg width="28" height="24" viewBox="0 0 28 24"><path d="M0 2c0-1 1-2 2-2h9l3 3h12c1 0 2 1 2 2v18H0z" fill="#ffce4b" /><path d="M0 2c0-1 1-2 2-2h9l2 2-2 3H0z" fill="#e89d10" /><path d="M5 24V14c0-1 1-2 2-2h14c1 0 2 1 2 2v10h-4v-5H9v5z" fill="#3a96dd" /></svg></TaskItem>
      <TaskItem on><svg width="32" height="32" viewBox="0 0 32 32" fill="none" stroke="#25d366" strokeWidth="2.600"><path d="M2 30l2-8C-1 12 6 2 16 2s15 8 14 15c-1 10-12 16-21 11z" /><path d="M10 9c-2 3 0 7 4 10s8 4 9 1l-4-3-2 1c-2-1-3-2-4-5l1-1-2-4z" fill="#25d366" strokeWidth=".5" /></svg><div className="absolute left-[34px] top-[22px] flex h-[25px] w-[25px] items-center justify-center rounded-full border border-[#aaa] bg-[#333831] text-[14px] font-bold tracking-tight">38</div></TaskItem>
      <TaskItem><Office c={["#33c481", "#21a366", "#107c41", "#185c37"]} l="X" /></TaskItem>
      <TaskItem><Office c={["#41a5ee", "#2b7cd3", "#185abd", "#103f91"]} l="W" /></TaskItem>
      <TaskItem><svg width="30" height="30" viewBox="0 0 30 30"><path d="M22 0l8 3v24l-8 3z" fill="#27a9f2" /><path d="M22 0v9L4 22.500 0 20v-2L22 0z" fill="#0873b5" /><path d="M22 30v-9L4 8 0 10v2l22 18z" fill="#0a93dd" /></svg></TaskItem>
      <TaskItem><svg width="30" height="30" viewBox="0 0 30 30"><circle cx="15" cy="15" r="15" fill="#fbc116" /><path d="M15 15L2 7.500A15 15 0 0 1 28 7.500H15z" fill="#e33b2e" /><path d="M15 15L2 7.500A15 15 0 0 0 15 30l6.500-11z" fill="#2ba24c" /><circle cx="15" cy="15" r="7.800" fill="#fff" /><circle cx="15" cy="15" r="6" fill="#2a7bf0" /></svg></TaskItem>
      <TaskItem on active w="ml-[1px] w-[61px]"><svg width="24" height="30" viewBox="0 0 24 30" className="-ml-[3px]"><rect x="14" width="10" height="30" rx="1" fill="#d98c0f" /><path d="M14 1c0-1 0-1 1-1h8c1 0 1 0 1 1v12H14z" fill="#e8a90f" /><rect x="7" y="7" width="10" height="23" rx="1" fill="#efbf25" /><rect y="15" width="10.500" height="15" rx="1" fill="#f8dd66" /></svg></TaskItem>
      <svg width="32" height="28" viewBox="0 0 32 28" className="ml-[303px]"><circle cx="22" cy="9" r="8" fill="#f29a1f" /><path d="M7 27c-9 0-9-11-1-12 2-10 16-10 18 0 9 0 8 12 1 12z" fill="#8fb9f5" /><path d="M4 24c4-5 20-5 25-1-1 3-2 4-4 4H7z" fill="#6f9de8" /></svg>
      <Fit w={38} className="ml-[8px] text-[17px]">35°C</Fit>
      <Fit w={111} className="ml-[10px] text-[17px]">Mostly cloudy</Fit>
      <svg width="17" height="10" viewBox="0 0 17 10" className="ml-[30px]" fill="none" stroke="#fff" strokeWidth="1.500"><path d="M1 9l7.500-7.500L16 9" /></svg>
      <svg width="17" height="19" viewBox="0 0 17 19" className="ml-[13px]"><path d="M8.500 0L17 4.500v10L8.500 19 0 14.500v-10z" fill="#f23c57" /><path d="M8.500 0L17 4.500l-8.500 5L3 3z" fill="#b02be8" /><path d="M0 8l8.500 2v9L0 14.500z" fill="#ff7a2a" /><path d="M8.500 9.500L17 4.500v10L8.500 19z" fill="#160b1c" /><path d="M10.500 16l3-1.600" stroke="#fff" /></svg>
      <svg width="22" height="19" viewBox="0 0 22 19" className="ml-[12px]"><path d="M4 13c-5 0-5-6-1-7 2-7 11-6 12 0 4 0 4 7 0 7z" fill="#d8d8d8" /><circle cx="14.500" cy="12.500" r="6" fill="#777" /><path d="M13 9.500v6M16 9.500v6" stroke="#fff" strokeWidth="1.200" /></svg>
      <svg width="20" height="14" viewBox="0 0 20 14" className="ml-[9px]" fill="none" stroke="#fff" strokeWidth="1.400"><path d="M1 1h16.500v12H1zM18.500 5v4" /><path d="M3 3h7v8H3z" fill="#fff" stroke="none" /></svg>
      <svg width="17" height="18" viewBox="0 0 17 18" className="ml-[12px]" fill="none" stroke="#fff" strokeWidth="1.300"><rect x="2" y="4.500" width="9" height="9" rx="2" /><path d="M11 8l4-2v6l-4-2M3 2q4-2 8 0M3 16q4 2 8 0" /></svg>
      <svg width="22" height="16" viewBox="0 0 22 16" className="ml-[11px]" fill="none" stroke="#fff" strokeWidth="1.300"><path d="M1 5h3l4-4v14l-4-4H1zM11 5.500q2 2.500 0 5M14 3q4 5 0 10M17 1q5 7 0 14" /></svg>
      <svg width="17" height="17" viewBox="0 0 17 17" className="ml-[10px]" fill="none" stroke="#eee" strokeWidth="1.300"><path d="M1 15Q1 1 16 1M5 15.500Q4 5 16 5M9 16Q8 9 16 9" /><circle cx="14" cy="14.500" r="1.800" fill="#fff" stroke="none" /></svg>
      <Fit w={29} className="ml-[14px] text-[14.500px]">ENG</Fit>
      <div className="ml-[15px] flex w-[76px] flex-col items-center text-[14px] leading-[23px]"><Fit w={60}>09:37 PM</Fit><Fit w={76}>04-09-2025</Fit></div>
      <div className="relative ml-[23px] h-[20px] w-[20px]"><svg width="20" height="22" viewBox="0 0 20 22"><path d="M0 0h20v17h-7l-3 4v-4H0z" fill="#fff" /><path d="M4 4.500h12M4 8.500h12M4 12.500h8" stroke="#222" strokeWidth="1.400" /></svg><div className="absolute left-[9px] top-[9px] flex h-[21px] w-[21px] items-center justify-center rounded-full border border-[#aaa] bg-[#2b2f31] text-[12.500px] font-bold">2</div></div>
      <div className="ml-[24px] h-[50px] w-px bg-[#666]" />
    </footer>
  );
}

export default function App() {
  return (
    <div className="flex h-[1080px] w-[1920px] flex-col overflow-hidden bg-[#f3f2f1] font-['Open_Sans','Noto_Sans',sans-serif]">
      <TitleBar />
      <Ribbon />
      <div className="flex h-[756px]"><Rail /><Report /><Panes /></div>
      <PageTabs />
      <Status />
      <Taskbar />
    </div>
  );
}
